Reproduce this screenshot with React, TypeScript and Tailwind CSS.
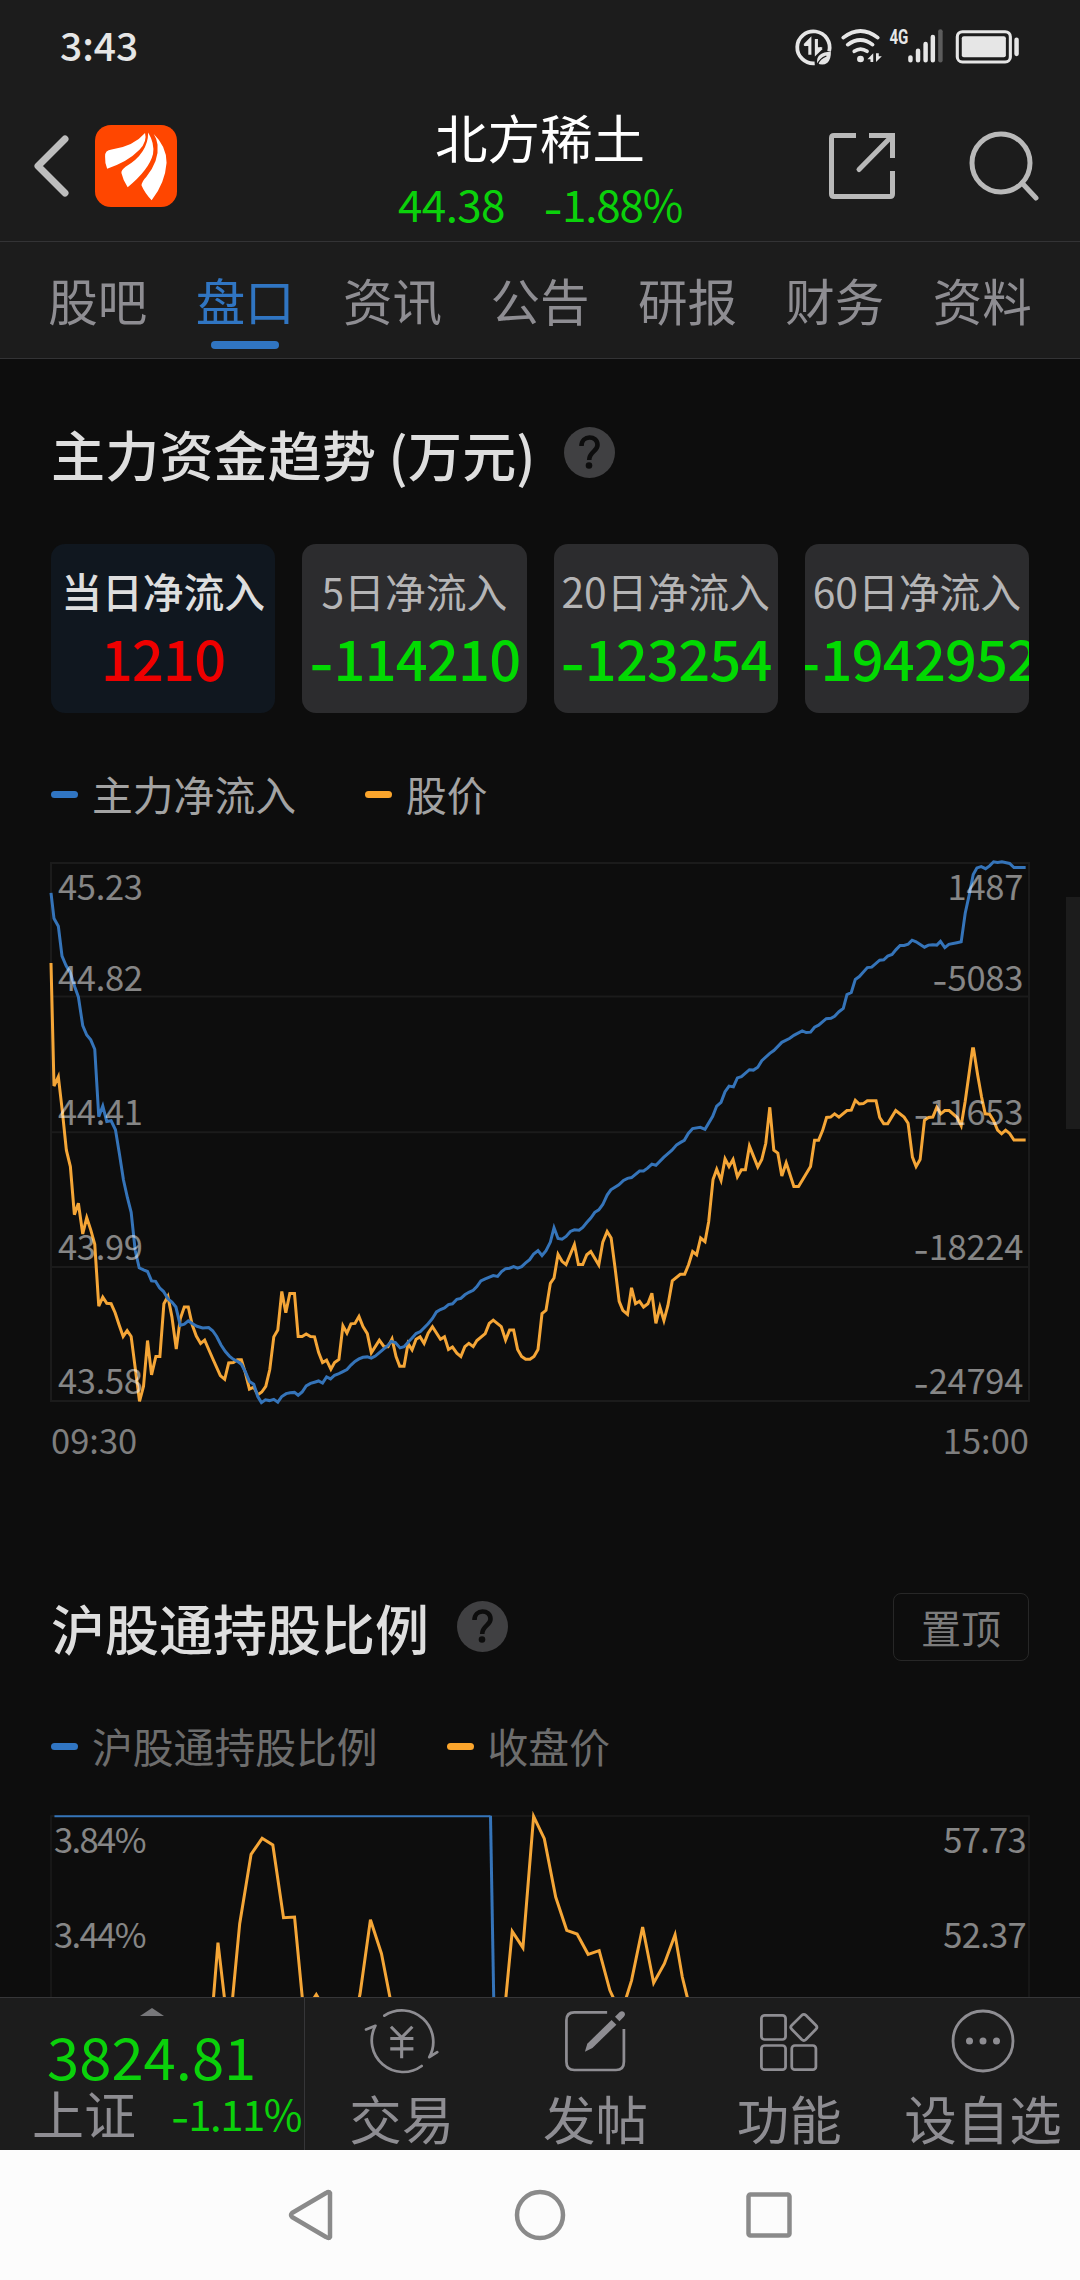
import { clsx } from 'clsx';
import type { ReactNode } from 'react';

const TABS = ['股吧', '盘口', '资讯', '公告', '研报', '财务', '资料'];

const INFLOWS = [
    { label: '当日净流入', value: '1210', active: true },
    { label: '5日净流入', value: '-114210', active: false },
    { label: '20日净流入', value: '-123254', active: false },
    { label: '60日净流入', value: '-1942952', active: false },
];

const AXIS_ROWS = [
    { left: '44.82', right: '-5083' },
    { left: '44.41', right: '-11653' },
    { left: '43.99', right: '-18224' },
    { left: '43.58', right: '-24794' },
];

const NET_INFLOW =
    '66,130 75,193 88,212 99,285 111,308 124,326 137,360 148,385 161,455 173,478 185,490 197,513 209,678 221,652 233,690 246,688 259,710 271,770 283,833 295,877 306,912 318,1005 330,1048 343,1053 355,1057 367,1080 379,1081 391,1097 403,1106 416,1124 428,1132 440,1144 453,1189 465,1186 477,1178 490,1185 503,1191 520,1195 538,1194 550,1202 562,1216 575,1237 588,1253 600,1264 612,1272 624,1277 636,1284 648,1303 660,1326 673,1333 685,1363 696,1378 708,1371 720,1373 733,1370 745,1377 757,1363 770,1356 782,1354 795,1353 806,1360 818,1352 830,1337 843,1331 855,1328 867,1325 879,1330 891,1315 903,1320 915,1311 928,1307 940,1302 952,1297 964,1286 976,1277 988,1271 1000,1267 1013,1266 1025,1269 1037,1264 1050,1255 1072,1240 1085,1228 1097,1231 1111,1244 1123,1241 1135,1230 1147,1220 1159,1209 1172,1204 1195,1185 1208,1172 1220,1156 1232,1150 1244,1146 1256,1138 1268,1136 1281,1125 1293,1123 1305,1114 1317,1108 1330,1103 1341,1094 1353,1080 1366,1075 1390,1067 1403,1069 1415,1057 1427,1050 1439,1049 1451,1045 1463,1049 1475,1045 1487,1036 1499,1028 1511,1014 1524,1006 1536,1018 1548,1006 1561,985 1572,950 1584,976 1596,978 1608,971 1621,959 1633,955 1647,956 1658,949 1670,937 1682,926 1694,912 1706,906 1718,893 1731,870 1742,857 1766,845 1780,834 1792,829 1804,827 1828,811 1840,811 1852,804 1865,794 1877,797 1901,777 1925,760 1939,747 1951,741 1962,736 1974,719 1987,707 2010,704 2024,709 2047,677 2059,652 2072,643 2084,617 2096,603 2109,605 2121,583 2133,580 2157,563 2169,564 2182,557 2194,541 2218,523 2230,516 2254,496 2278,486 2290,479 2315,468 2327,472 2340,471 2352,459 2364,454 2387,438 2401,437 2412,432 2425,421 2438,413 2449,379 2462,374 2474,342 2486,335 2510,313 2523,312 2547,295 2559,294 2571,285 2584,281 2596,269 2608,259 2620,259 2632,256 2644,246 2656,250 2681,263 2693,258 2706,257 2718,258 2729,249 2742,264 2754,256 2778,252 2791,250 2803,180 2815,135 2827,85 2838,69 2851,66 2864,71 2876,64 2888,54 2900,56 2913,54 2936,58 2949,68 2984,68';

const PRICE =
    '66,302 75,603 88,580 100,665 112,760 124,800 136,918 148,890 161,965 173,925 185,955 197,990 209,1142 221,1120 233,1135 246,1136 258,1158 270,1188 282,1216 294,1202 306,1216 331,1375 343,1338 355,1226 367,1310 380,1265 392,1265 404,1136 416,1118 428,1168 441,1247 453,1173 465,1144 477,1144 489,1188 501,1215 514,1233 526,1225 550,1270 573,1312 586,1321 598,1281 612,1280 624,1273 636,1273 648,1305 660,1345 673,1340 685,1359 697,1352 709,1338 721,1297 733,1217 745,1200 757,1106 769,1158 781,1111 795,1111 806,1216 818,1216 830,1210 843,1216 855,1217 867,1255 879,1280 891,1274 904,1296 915,1280 928,1272 940,1190 952,1208 964,1185 976,1184 988,1167 1000,1192 1013,1209 1025,1256 1049,1225 1063,1241 1075,1241 1087,1222 1099,1265 1110,1289 1123,1289 1135,1233 1147,1249 1159,1223 1171,1217 1183,1233 1195,1208 1208,1192 1232,1223 1244,1217 1256,1248 1268,1242 1281,1257 1293,1265 1305,1241 1317,1233 1330,1241 1341,1226 1366,1209 1378,1184 1390,1176 1414,1192 1427,1225 1439,1200 1451,1200 1463,1248 1475,1265 1487,1272 1500,1272 1512,1265 1524,1248 1536,1160 1548,1152 1561,1086 1572,1073 1584,1015 1596,1032 1608,1040 1633,991 1645,1040 1658,1040 1670,1016 1682,1008 1706,1041 1718,985 1731,959 1743,975 1755,1050 1767,1130 1778,1152 1792,1162 1804,1097 1816,1136 1828,1130 1840,1144 1853,1136 1865,1110 1877,1184 1889,1144 1901,1177 1913,1140 1926,1080 1950,1064 1963,1064 1975,1040 1987,1008 1999,1016 2011,975 2024,984 2035,935 2048,832 2059,807 2072,834 2084,781 2096,800 2108,783 2121,825 2133,808 2145,808 2157,750 2182,801 2194,783 2206,743 2218,655 2230,760 2242,767 2254,823 2267,791 2290,849 2304,849 2340,800 2352,736 2364,736 2376,712 2388,680 2400,679 2412,671 2425,679 2449,663 2462,662 2474,638 2486,647 2498,646 2510,639 2536,639 2547,680 2559,695 2571,695 2595,663 2620,679 2632,694 2645,777 2656,800 2668,783 2681,687 2693,680 2706,679 2718,655 2730,671 2742,663 2755,663 2779,680 2791,700 2803,640 2825,512 2828,512 2840,575 2852,630 2863,671 2876,672 2888,688 2900,711 2912,720 2924,711 2936,719 2949,735 2984,735';

const CLOSE_PRICE =
    'M618 1320 634 1117 657 1320M673 1320 697 1060 730 852 762 804 793 824 824 1042 856 1040 882 1320M905 1295 919 1273 932 1295M1040 1300 1046 1270 1076 1048 1108 1150 1138 1310M1465 1320 1487 1083 1518 1132 1549 738 1580 805 1613 980 1645 1080 1675 1091 1707 1152 1739 1141 1770 1260 1788 1300M1812 1300 1833 1230 1865 1070 1897 1238 1928 1180 1959 1093 1980 1220 1999 1300';

// Inter's hyphen is wider than the CJK font's, which reads better as a minus sign
function Signed({ value }: { value: string }) {
    if (!value.startsWith('-')) return <>{value}</>;
    return (
        <>
            <span className="inline-block translate-y-[0.08em] font-[Inter,sans-serif] leading-none">-</span>
            {value.slice(1)}
        </>
    );
}

function StatusIcons() {
    return (
        <svg
            viewBox="738 80 656 114"
            preserveAspectRatio="none"
            className="h-[38px] w-[226px] overflow-visible"
            fill="none"
            stroke="#e6e6e6"
        >
            {/* data saver */}
            <path d="M840 150A47 48 0 1 0 798 186" strokeWidth="11" />
            <path d="M784 160V116L769 132M803 113V155L818 140" strokeWidth="9" />
            <path d="M784 112V134H766ZM803 158V138H821Z" fill="#e6e6e6" stroke="none" />
            <path d="M845 151Q802 152 805 184Q820 195 835 184Q846 172 845 151Z" fill="#e6e6e6" stroke="none" />
            <path d="M806 190Q812 172 832 164" stroke="#1c1c1c" strokeWidth="4" />
            {/* wifi */}
            <path d="M881 109Q931 69 981 109M894 130Q931 102 966 130M913 150Q931 137 950 150" strokeWidth="11" strokeLinecap="round" />
            <circle cx="931" cy="173" r="10" fill="#e6e6e6" stroke="none" />
            <path d="M968 156V182H960V174H951ZM976 182V156H984V165H993Z" fill="#e6e6e6" stroke="none" />
            <text
                x="1015"
                y="128"
                textLength="55"
                lengthAdjust="spacingAndGlyphs"
                fill="#e6e6e6"
                stroke="none"
                className="font-[Roboto,sans-serif] text-[60px] font-bold"
            >
                4G
            </text>
            {/* signal */}
            <path d="M1076 168V177M1098 148V177M1120 128V177M1141 107V177" strokeWidth="13" strokeLinecap="round" />
            <path d="M1163 90V177" stroke="#5c5c5c" strokeWidth="13" strokeLinecap="round" />
            {/* battery */}
            <rect x="1212" y="91" width="154" height="91" rx="15" strokeWidth="9" />
            <rect x="1225" y="105" width="128" height="63" rx="6" fill="#e6e6e6" stroke="none" />
            <path d="M1384 115V158" strokeWidth="13" strokeLinecap="round" />
        </svg>
    );
}

function Logo() {
    return (
        <svg viewBox="277 376 236 244" preserveAspectRatio="none" className="h-[82px] w-[82px]" fill="#fff">
            <rect x="277" y="376" width="236" height="244" rx="46" fill="#ff4600" />
            <path d="M306 470Q305 451 325 449Q388 440 421 400Q428 425 405 450Q370 487 312 506Q305 490 306 470Z" />
            <path d="M430 398Q449 430 444 462Q433 508 371 561Q358 542 353 519Q352 510 365 500Q430 460 430 398Z" />
            <path d="M446 403Q483 440 483 488Q479 548 440 600Q420 578 411 556Q411 545 425 530Q462 482 457 435Q454 415 446 403Z" />
        </svg>
    );
}

function Header() {
    return (
        <header className="h-[242px] border-b border-[#333335] bg-[#1c1c1c]">
            <div className="flex h-[94px] items-center justify-between pr-[60px] pl-[60px]">
                <span className="pb-[6px] text-[39px] leading-[60px] font-medium text-[#e6e6e6]">3:43</span>
                <StatusIcons />
            </div>
            <div className="grid h-[144px] grid-cols-[1fr_auto_1fr] items-center pr-[41px] pl-[34px]">
                <div className="flex items-center gap-[26px]">
                    <svg viewBox="0 0 35 62" className="h-[62px] w-[35px]" fill="none" stroke="#bdbdbd" strokeWidth="7" strokeLinecap="round">
                        <path d="M31 4 4 31 31 58" strokeLinejoin="round" />
                    </svg>
                    <Logo />
                </div>
                <div className="mt-[7px] ml-[7px] flex flex-col items-center gap-[7px]">
                    <h1 className="text-[52.5px] leading-[60px] text-white">北方稀土</h1>
                    <div className="flex gap-[38px] text-[44px] leading-[60px] tracking-[-0.6px] text-[#0bd10b]">
                        <span>44.38</span>
                        <span className="tracking-[-1.2px]">
                            <Signed value="-1.88%" />
                        </span>
                    </div>
                </div>
                <div className="flex items-center justify-end gap-[74px]">
                    <svg viewBox="0 0 66 66" className="size-[66px]" fill="none" stroke="#b9b9b9" strokeWidth="5">
                        <path d="M27 2.5H5Q2.5 2.5 2.5 5V61Q2.5 63.5 5 63.5H61Q63.5 63.5 63.5 61V38M40 2.5H63.5V25" />
                        <path d="M62 4 30 36.5" strokeLinecap="round" />
                    </svg>
                    <svg viewBox="0 0 70 70" className="size-[70px]" fill="none" stroke="#b9b9b9" strokeWidth="5" strokeLinecap="round">
                        <circle cx="32" cy="32" r="29" />
                        <path d="M53 52 67 67" />
                    </svg>
                </div>
            </div>
        </header>
    );
}

function Tabs() {
    return (
        <nav className="flex h-[117px] border-b border-[#333335] bg-[#1c1c1c] px-6">
            {TABS.map((tab) => {
                const active = tab === '盘口';
                return (
                    <div key={tab} className="flex flex-1 flex-col items-center pt-[22px]">
                        <span className={clsx('text-[49.5px] leading-[72px]', active ? 'text-[#3075c2]' : 'text-[#8e8d92]')}>{tab}</span>
                        {active && <span className="mt-[5px] h-2 w-[68px] rounded-full bg-[#3075c2]" />}
                    </div>
                );
            })}
        </nav>
    );
}

function HelpIcon() {
    return (
        <svg viewBox="0 0 51 51" className="mb-[3px] size-[51px]" fill="none">
            <circle cx="25.5" cy="25.5" r="25.5" fill="#404042" />
            <path d="M17.5 19C17.5 7.5 33.5 8 33.5 18C33.5 24.5 25.2 24.5 25.2 33" stroke="#0d0d0d" strokeWidth="4.6" />
            <circle cx="25" cy="38.5" r="3.3" fill="#0d0d0d" />
        </svg>
    );
}

function LegendItem({ color, children }: { color: 'blue' | 'orange'; children: ReactNode }) {
    return (
        <div className="flex items-center gap-[14px]">
            <span className={clsx('h-[7px] w-[27px] rounded-full', color === 'blue' ? 'bg-[#3075c2]' : 'bg-[#fba52c]')} />
            <span>{children}</span>
        </div>
    );
}

function TrendChart() {
    return (
        <div className="relative h-[538px]">
            <svg viewBox="66 57 2928 1317" preserveAspectRatio="none" className="h-full w-full overflow-visible" fill="none">
                <g stroke="#1b1b1b" strokeWidth="2">
                    <path d="M66 57H2994V1374H66ZM66 384H2994M66 716H2994M66 1046H2994" vectorEffect="non-scaling-stroke" />
                </g>
                <polyline points={PRICE} stroke="#f5a637" strokeWidth="3" vectorEffect="non-scaling-stroke" />
                <polyline points={NET_INFLOW} stroke="#3574b9" strokeWidth="3" vectorEffect="non-scaling-stroke" />
            </svg>
            {/* Axis values sit on top of the lines */}
            <div className="absolute inset-0 grid grid-rows-4 pr-[6px] pl-[7px] text-[34.5px] leading-[44px] tracking-[-0.3px] text-white/50">
                {AXIS_ROWS.map((row, i) => (
                    <div key={row.left} className="flex flex-col justify-between">
                        <div className="flex justify-between">
                            {i === 0 && (
                                <>
                                    <span>45.23</span>
                                    <span>1487</span>
                                </>
                            )}
                        </div>
                        <div className="flex h-[44px] justify-between">
                            <span>{row.left}</span>
                            <span>
                                <Signed value={row.right} />
                            </span>
                        </div>
                    </div>
                ))}
            </div>
        </div>
    );
}

function HoldingChart() {
    return (
        <div className="relative h-[181px]">
            <svg viewBox="150 737 2835 543" preserveAspectRatio="none" className="h-full w-full overflow-visible" fill="none">
                <path d="M150 1290V737H2985V1290" stroke="#1b1b1b" strokeWidth="1.5" vectorEffect="non-scaling-stroke" />
                <path d="M160 738H1424" stroke="#3574b9" strokeWidth="2" vectorEffect="non-scaling-stroke" />
                <path d="M1424 736 1434 1320" stroke="#3574b9" strokeWidth="3" vectorEffect="non-scaling-stroke" />
                <path d={CLOSE_PRICE} stroke="#f5a637" strokeWidth="3" vectorEffect="non-scaling-stroke" />
            </svg>
            <div className="absolute inset-x-0 top-0 flex flex-col gap-[51px] pr-[3px] pl-[3px] text-[34.5px] leading-[44px] tracking-[-0.7px] text-white/50">
                <div className="flex justify-between">
                    <span className="tracking-[-1.6px]">3.84%</span>
                    <span>57.73</span>
                </div>
                <div className="flex justify-between">
                    <span className="tracking-[-1.6px]">3.44%</span>
                    <span>52.37</span>
                </div>
            </div>
        </div>
    );
}

function ActionItem({ label, children }: { label: string; children: ReactNode }) {
    return (
        <div className="flex flex-1 flex-col items-center gap-[13px] pt-[10px]">
            <div className="flex h-[66px] items-center">{children}</div>
            <span className="text-[52.5px] leading-[60px] whitespace-nowrap">{label}</span>
        </div>
    );
}

function BottomBar() {
    return (
        <footer className="flex h-[153px] border-t border-[#363638] bg-[#1c1c1c] text-[#8e8d92]">
            <div className="w-[305px] shrink-0 border-r border-[#363638] pt-[10px]">
                <svg viewBox="0 0 24 8" className="mx-auto h-2 w-6" fill="#77777a">
                    <path d="M0 8 12 0 24 8Z" />
                </svg>
                <div className="mt-[8px] pl-[47px] text-[58px] leading-[62px] text-[#0bd10b]">3824.81</div>
                <div className="-mt-[3px] flex h-[60px] items-center justify-between pr-[3px] pl-[32px] leading-[60px]">
                    <span className="text-[52px]">上证</span>
                    <span className="text-[42px] tracking-[-1.5px] text-[#0bd10b]">
                        <Signed value="-1.11%" />
                    </span>
                </div>
            </div>
            <ActionItem label="交易">
                <svg
                    viewBox="1055 85 220 200"
                    preserveAspectRatio="none"
                    className="h-[67px] w-[76px]"
                    fill="none"
                    stroke="currentColor"
                    strokeWidth="8"
                    strokeLinecap="round"
                >
                    <path d="M1114 108A91 94 0 0 1 1244 232L1267 217M1222 258A91 94 0 0 1 1088 138L1061 149" strokeLinejoin="round" />
                    <path d="M1133 141 1164 173 1195 141M1131 176H1198M1131 207H1198M1164 173V235" strokeLinecap="butt" strokeWidth="9" />
                </svg>
            </ActionItem>
            <ActionItem label="发帖">
                <svg viewBox="65 88 190 192" preserveAspectRatio="none" className="h-16 w-[65px]" fill="currentColor">
                    <path
                        d="M194 98H98Q75 98 75 122V246Q75 271 98 271H220Q243 271 243 246V148"
                        fill="none"
                        stroke="currentColor"
                        strokeWidth="8"
                    />
                    <path d="M129 216 136 192 207 121 221 135 151 205Z" />
                    <path d="M217 111 231 97Q238 92 244 98Q249 105 243 111L230 125Z" />
                </svg>
            </ActionItem>
            <ActionItem label="功能">
                <svg viewBox="636 90 174 184" preserveAspectRatio="none" className="h-[61px] w-[60px]" fill="none" stroke="currentColor" strokeWidth="8">
                    <rect x="643" y="103" width="70" height="73" rx="9" />
                    <rect x="643" y="194" width="70" height="73" rx="9" />
                    <rect x="731" y="194" width="70" height="73" rx="9" />
                    <path d="M760 103Q766 97 772 103L801 133Q807 139 801 145L772 176Q766 182 760 176L731 145Q725 139 731 133Z" />
                </svg>
            </ActionItem>
            <ActionItem label="设自选">
                <svg viewBox="0 0 64 64" className="size-16" fill="none" stroke="currentColor" strokeWidth="2.8">
                    <circle cx="32" cy="32" r="30" />
                    <path d="M18.5 32H18.51M32 32H32.01M45.5 32H45.51" strokeWidth="7" strokeLinecap="round" />
                </svg>
            </ActionItem>
        </footer>
    );
}

function SystemNav() {
    return (
        <div className="flex h-[130px] items-center justify-center gap-[180px] bg-[#fcfcfc]">
            <svg viewBox="0 0 46 52" className="h-[52px] w-[46px]" fill="none" stroke="#8a8a8a" strokeWidth="4.5" strokeLinejoin="round">
                <path d="M42 4V48Q41 50 38 48L4 28Q2 26 4 24L38 4Q41 2 42 4Z" />
            </svg>
            <svg viewBox="0 0 52 52" className="size-[52px]" fill="none" stroke="#8a8a8a" strokeWidth="4.5">
                <circle cx="26" cy="26" r="23" />
            </svg>
            <svg viewBox="0 0 46 46" className="size-[46px]" fill="none" stroke="#8a8a8a" strokeWidth="4.5">
                <rect x="2.5" y="2.5" width="41" height="41" rx="2" />
            </svg>
        </div>
    );
}

export default function App() {
    return (
        <div className="flex h-[2280px] w-[1080px] flex-col overflow-hidden bg-[#0d0d0d] font-['Noto_Sans_CJK_SC',sans-serif]">
            <Header />
            <Tabs />
            <main className="relative flex-1 overflow-hidden px-[51px]">
                <div className="mt-[57px] flex h-[76px] items-center gap-[28px]">
                    <h2 className="text-[54px] leading-[76px] font-medium tracking-[0.2px] text-[#dedede]">主力资金趋势 (万元)</h2>
                    <HelpIcon />
                </div>

                <div className="mt-[52px] grid grid-cols-4 gap-[27px]">
                    {INFLOWS.map(({ label, value, active }) => (
                        <div
                            key={label}
                            className={clsx(
                                'flex h-[169px] flex-col items-center overflow-hidden rounded-[14px] pt-[17px] whitespace-nowrap',
                                active ? 'bg-[#10171f]' : 'bg-[#2c2c2e]',
                            )}
                        >
                            <span className={clsx('text-[40.8px] leading-[60px]', active ? 'font-medium text-[#dedede]' : 'text-[#b5b5b6]')}>
                                {label}
                            </span>
                            <span
                                className={clsx(
                                    'mt-[1px] flex w-full justify-center text-[56px] leading-[70px] font-medium tracking-[-0.8px]',
                                    value.startsWith('-') ? 'text-[#02d902]' : 'text-[#ee0000]',
                                )}
                            >
                                <span>
                                    <Signed value={value} />
                                </span>
                            </span>
                        </div>
                    ))}
                </div>

                <div className="mt-[51px] flex h-[60px] gap-[69px] text-[40.8px] leading-[60px] text-[#a3a3a3]">
                    <LegendItem color="blue">主力净流入</LegendItem>
                    <LegendItem color="orange">股价</LegendItem>
                </div>
                <div className="mt-[39px]">
                    <TrendChart />
                </div>
                <div className="mt-[13px] flex h-[50px] justify-between text-[34.5px] leading-[50px] text-[#7e7e7e]">
                    <span>09:30</span>
                    <span>15:00</span>
                </div>

                <div className="mt-[126px] flex h-[76px] items-center">
                    <h2 className="text-[54px] leading-[76px] font-medium text-[#dedede]">沪股通持股比例</h2>
                    <div className="ml-[28px]">
                        <HelpIcon />
                    </div>
                    <button className="mb-[2px] ml-auto h-[68px] w-[136px] rounded-lg border border-[#272727] text-[40px] leading-[60px] text-[#7c7c7c]">
                        置顶
                    </button>
                </div>
                <div className="mt-[50px] flex h-[60px] gap-[69px] text-[40.8px] leading-[60px] text-[#6d6d6d]">
                    <LegendItem color="blue">沪股通持股比例</LegendItem>
                    <LegendItem color="orange">收盘价</LegendItem>
                </div>
                <div className="mt-[40px]">
                    <HoldingChart />
                </div>

                {/* side drawer handle */}
                <div className="absolute top-[538px] right-0 h-[232px] w-[14px] bg-[#1c1c1c]" />
            </main>
            <BottomBar />
            <SystemNav />
        </div>
    );
}
